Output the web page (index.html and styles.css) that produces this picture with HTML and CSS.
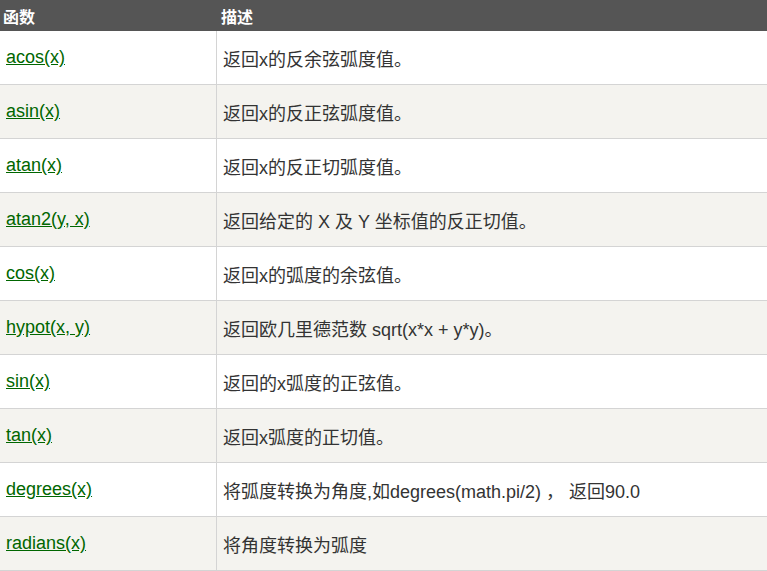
FILE: index.html
```html
<!DOCTYPE html>
<html lang="zh-CN">
<head>
<meta charset="utf-8">
<title>Python 数学函数</title>
<link rel="stylesheet" href="styles.css">
</head>
<body>
<table class="ref">
  <colgroup><col class="col-fn"><col class="col-desc"></colgroup>
  <thead>
    <tr><th>函数</th><th class="th-desc">描述</th></tr>
  </thead>
  <tbody>
    <tr><td><a href="#">acos(x)</a></td><td>返回x的反余弦弧度值。</td></tr>
    <tr><td><a href="#">asin(x)</a></td><td>返回x的反正弦弧度值。</td></tr>
    <tr><td><a href="#">atan(x)</a></td><td>返回x的反正切弧度值。</td></tr>
    <tr><td><a href="#">atan2(y, x)</a></td><td>返回给定的 X 及 Y 坐标值的反正切值。</td></tr>
    <tr><td><a href="#">cos(x)</a></td><td>返回x的弧度的余弦值。</td></tr>
    <tr><td><a href="#">hypot(x, y)</a></td><td>返回欧几里德范数 sqrt(x*x + y*y)。</td></tr>
    <tr><td><a href="#">sin(x)</a></td><td>返回的x弧度的正弦值。</td></tr>
    <tr><td><a href="#">tan(x)</a></td><td>返回x弧度的正切值。</td></tr>
    <tr><td><a href="#">degrees(x)</a></td><td>将弧度转换为角度,如degrees(math.pi/2) ，&nbsp;返回90.0</td></tr>
    <tr><td><a href="#">radians(x)</a></td><td>将角度转换为弧度</td></tr>
  </tbody>
</table>
</body>
</html>
```
FILE: styles.css
```css
html, body {
  margin: 0;
  padding: 0;
  background: #ffffff;
}

body {
  font-family: "Liberation Sans", Arial, "Noto Sans CJK SC", sans-serif;
  color: #333333;
}

.ref {
  width: 100%;
  table-layout: fixed;
  border-collapse: separate;
  border-spacing: 0;
}

.col-fn {
  width: 216px;
}

.ref th {
  background: #555555;
  color: #ffffff;
  font-size: 16px;
  font-weight: bold;
  text-align: left;
  height: 31px;
  padding: 0 3px;
  box-sizing: border-box;
  vertical-align: middle;
}

.ref th.th-desc {
  padding-left: 5px;
}

.ref td {
  font-size: 18px;
  height: 54px;
  box-sizing: border-box;
  padding: 0 6px;
  vertical-align: middle;
  border-bottom: 1px solid #d4d4d4;
  white-space: nowrap;
}

.ref td + td {
  border-left: 1px solid #d4d4d4;
}

.ref tbody tr:nth-child(even) td {
  background: #f4f3ef;
}

.ref a {
  color: #006600;
  text-decoration: underline;
}
```
